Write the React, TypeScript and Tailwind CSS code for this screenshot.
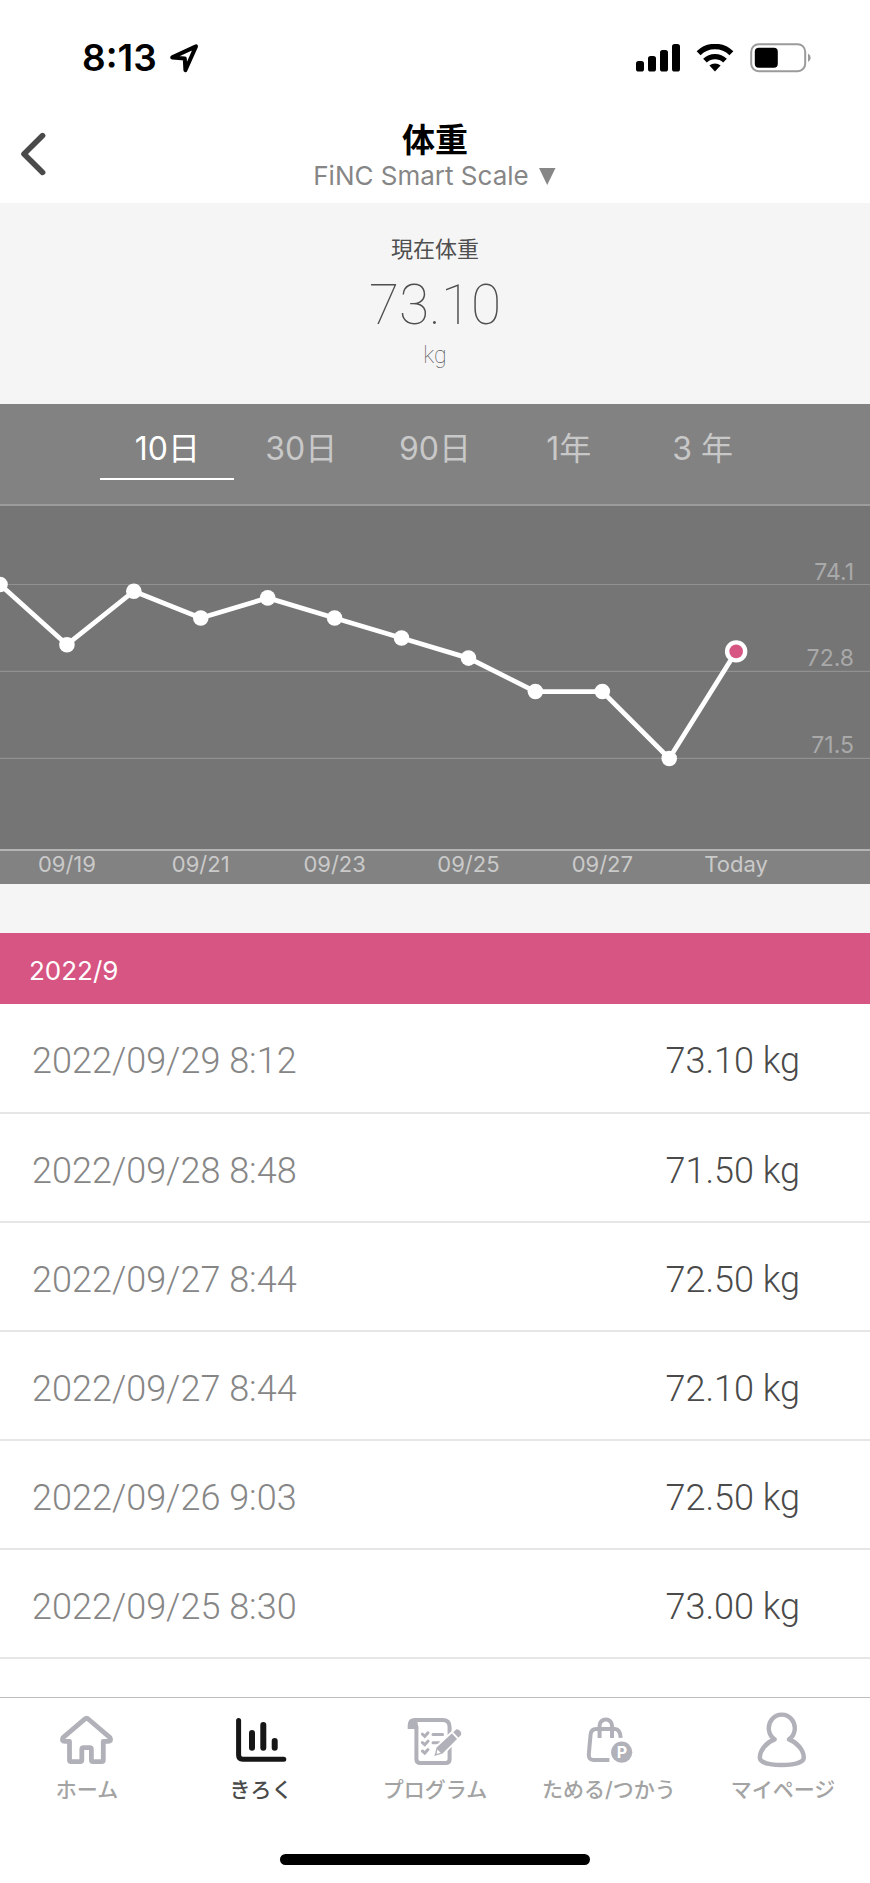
import React, { useState } from "react";

const periods = ["10日", "30日", "90日", "1年", "3 年"];

const weights = [74.1, 73.2, 74.0, 73.6, 73.9, 73.6, 73.3, 73.0, 72.5, 72.5, 71.5, 73.1];

const gridValues = [74.1, 72.8, 71.5];

const axisDates = ["09/19", "09/21", "09/23", "09/25", "09/27", "Today"];

const records = [
  { date: "2022/09/29 8:12", weight: "73.10 kg" },
  { date: "2022/09/28 8:48", weight: "71.50 kg" },
  { date: "2022/09/27 8:44", weight: "72.50 kg" },
  { date: "2022/09/27 8:44", weight: "72.10 kg" },
  { date: "2022/09/26 9:03", weight: "72.50 kg" },
  { date: "2022/09/25 8:30", weight: "73.00 kg" },
];

function StatusBar() {
  return (
    <div className="flex h-[116px] items-center justify-between pr-[58px] pl-[82px]">
      <div className="flex items-center gap-3">
        <span className="text-[37px] leading-[40px] font-semibold text-black">8:13</span>
        <svg width="30" height="32" viewBox="0 0 30 32" fill="none" aria-hidden="true">
          <path d="M3.2 15.4 27 4.4 16.4 28.2 15.8 16.6Z" stroke="#000" strokeWidth="4" strokeLinejoin="round" />
        </svg>
      </div>
      <div className="flex items-center gap-4">
        <svg width="44" height="28" viewBox="0 0 44 28" aria-hidden="true">
          <rect x="0" y="17" width="8" height="10.6" rx="2.6" />
          <rect x="12" y="12" width="8" height="15.6" rx="2.6" />
          <rect x="24" y="6" width="8" height="21.6" rx="2.6" />
          <rect x="36" y="0" width="8" height="27.6" rx="2.6" />
        </svg>
        <svg width="38" height="28" viewBox="0 0 38 28" aria-hidden="true">
          <path d="M2.6 9.2a23.6 23.6 0 0 1 32.8 0" fill="none" stroke="#000" strokeWidth="5.6" />
          <path d="M9 16.6a14.6 14.6 0 0 1 20 0" fill="none" stroke="#000" strokeWidth="5.4" />
          <path d="M19 27.6 13.4 21.6a8.4 8.4 0 0 1 11.2 0Z" />
        </svg>
        <svg width="62" height="30" viewBox="0 0 62 30" aria-hidden="true">
          <rect x="1.2" y="1.2" width="54" height="27" rx="7.5" fill="none" stroke="#9b9b9b" strokeWidth="2" />
          <rect x="4.8" y="4.8" width="23" height="20" rx="4" />
          <path d="M58 10.6a4.6 4.6 0 0 1 0 8.4Z" fill="#9b9b9b" />
        </svg>
      </div>
    </div>
  );
}

function Header() {
  return (
    <header className="grid h-[87px] grid-cols-[1fr_auto_1fr] items-start">
      <button type="button" aria-label="戻る" className="ml-5 w-10 pt-4">
        <svg width="28" height="44" viewBox="0 0 28 44" fill="none" aria-hidden="true">
          <path d="M22.6 3.6 4 22 22.6 40.4" stroke="#4a4a4a" strokeWidth="5.6" strokeLinecap="round" strokeLinejoin="round" />
        </svg>
      </button>
      <div className="flex flex-col items-center pt-[2px]">
        <h1 className="text-[33px] leading-[44px] font-bold text-black">体重</h1>
        <button type="button" className="flex items-center gap-2 text-[26px] leading-[28px] text-[#868686]">
          FiNC Smart Scale
          <svg width="20" height="20" viewBox="0 0 20 20" fill="#868686" aria-hidden="true">
            <path d="M2 2H18.5L10.2 19Z" />
          </svg>
        </button>
      </div>
    </header>
  );
}

function CurrentWeight() {
  return (
    <section className="flex h-[201px] flex-col items-center bg-[#f5f5f5] pt-[30px] text-[#4f4f4f]">
      <h2 className="text-[22px] leading-[32px]">現在体重</h2>
      <p className="mt-2 font-[Roboto] text-[55px] leading-[64px] font-thin">73.10</p>
      <p className="mt-1 font-[Roboto] text-[23px] leading-[30px] font-thin">kg</p>
    </section>
  );
}

function WeightChart() {
  const step = 870 / 13;
  const points = weights.map((w, i) => ({ x: i * step, y: 78.5 + (74.1 - w) * 66.9 }));
  const last = points[points.length - 1];
  return (
    <div className="bg-[#757575]">
      <svg viewBox="0 0 870 343" className="block w-full" role="img" aria-label="体重の推移">
        {gridValues.map((v) => {
          const y = 78.5 + (74.1 - v) * 66.9;
          return (
            <g key={v}>
              <line x1="0" x2="870" y1={y} y2={y} stroke="#919191" strokeWidth="1.2" />
              <text x="854" y={y - 5} textAnchor="end" className="fill-[#a9a9a9] text-[23px]">
                {v.toFixed(1)}
              </text>
            </g>
          );
        })}
        <polyline points={points.map((p) => `${p.x},${p.y}`).join(" ")} fill="none" stroke="#fff" strokeWidth="4.8" />
        {points.slice(0, -1).map((p) => (
          <circle key={p.x} cx={p.x} cy={p.y} r="7.8" fill="#fff" />
        ))}
        <circle cx={last.x} cy={last.y} r="11.2" fill="#fff" />
        <circle cx={last.x} cy={last.y} r="6.8" fill="#d75583" />
      </svg>
    </div>
  );
}

function ChartPanel() {
  const [active, setActive] = useState(periods[0]);
  return (
    <section className="bg-[#828282]">
      <div className="flex h-[102px] justify-center border-b-2 border-[#9c9c9c] pt-4">
        <div className="grid h-[60px] w-10/13 grid-cols-5">
          {periods.map((p) => (
            <button
              key={p}
              type="button"
              aria-pressed={p === active}
              onClick={() => setActive(p)}
              className={
                p === active
                  ? "border-b-2 border-white text-[32px] leading-[58px] text-white"
                  : "border-b-2 border-transparent text-[32px] leading-[58px] text-[#c8c8c8]"
              }
            >
              {p}
            </button>
          ))}
        </div>
      </div>
      <WeightChart />
      <div className="grid h-[35px] grid-cols-13 border-t-2 border-[#b4b4b4] text-center text-[22px] leading-[26px] text-[#cacaca]">
        {axisDates.map((d) => (
          <span key={d} className="col-span-2">
            {d}
          </span>
        ))}
      </div>
    </section>
  );
}

function Records() {
  return (
    <section>
      <h2 className="h-[71px] bg-[#d75583] px-[29px] text-[26px] leading-[76px] text-white">2022/9</h2>
      <table className="w-full border-collapse font-[Roboto] text-[36px] font-light">
        <tbody>
          {records.map((r, i) => (
            <tr key={i} className="h-[109px] border-b-2 border-[#e6e6e6]">
              <td className="pt-[6px] pl-[32px] text-left text-[#868686]">{r.date}</td>
              <td className="pt-[6px] pr-[70px] text-right text-[#4a4a4a]">{r.weight}</td>
            </tr>
          ))}
        </tbody>
      </table>
    </section>
  );
}

function HomeIcon() {
  return (
    <svg width="58" height="56" viewBox="0 0 58 56" fill="none" aria-hidden="true">
      <path
        d="M26.7 7.2Q28.6 5.4 30.5 7.2L52 25.6Q54 29.3 50 29.3H45.3V48Q45.3 49.6 43.7 49.6H34.9Q33.4 49.6 33.4 48V37.4Q33.4 35.6 31.6 35.6H25.6Q23.8 35.6 23.8 37.4V48Q23.8 49.6 22.2 49.6H13Q11.5 49.6 11.5 48V29.3H7Q3 29.3 5 25.6Z"
        stroke="#b1b1b9"
        strokeWidth="4.8"
        strokeLinejoin="round"
      />
    </svg>
  );
}

function RecordIcon() {
  return (
    <svg width="58" height="56" viewBox="0 0 58 56" fill="none" stroke="#161616" strokeLinecap="round" aria-hidden="true">
      <path d="M6.6 8.4V43Q6.6 47.2 10.8 47.2H51.8" strokeWidth="5" strokeLinejoin="round" />
      <path d="M20 21V35.8M31.3 13V35.8M42.7 29V35.8" strokeWidth="6" />
    </svg>
  );
}

function ProgramIcon() {
  return (
    <svg width="58" height="56" viewBox="0 0 58 56" fill="none" stroke="#b1b1b9" aria-hidden="true">
      <path d="M1.7 17V13.4Q1.7 6 9 6Q12.2 8.6 12.2 17Z" fill="#b1b1b9" stroke="none" />
      <path d="M8 7.9H36.4Q43.6 7.9 43.6 15V47Q43.6 51 39.6 51H14.4Q10.4 51 10.4 47V14" strokeWidth="4" />
      <path d="M16.4 22.2 18.8 24.3 22 20.8M16.4 30.6 18.8 32.7 22 29.2M16.4 39 18.8 41.1 22 37.6" strokeWidth="3" strokeLinecap="round" />
      <path d="M27 22.6H36.6M27 30.8H34" strokeWidth="3" strokeLinecap="round" />
      <path d="M28.4 44 30.6 35.4 50.4 17.2Q52.2 16.8 54.2 19Q56 21.2 55 23L36.6 41.6Z" fill="#b1b1b9" stroke="#fff" strokeWidth="3.6" strokeLinejoin="round" />
      <path d="M28.4 44 30.6 35.4 50.4 17.2Q52.2 16.8 54.2 19Q56 21.2 55 23L36.6 41.6Z" fill="#b1b1b9" stroke="none" />
      <path d="M46.2 20.4 52 26.6" stroke="#fff" strokeWidth="1.8" />
      <path d="M31.2 37.4 34.8 40.8 30.6 42Z" fill="#fff" stroke="none" />
    </svg>
  );
}

function PointsIcon() {
  return (
    <svg width="58" height="56" viewBox="0 0 58 56" fill="none" stroke="#b1b1b9" strokeWidth="4" aria-hidden="true">
      <path d="M29.4 48H13.4Q8.4 48 8.8 42.4L10.6 22.4Q11.2 17 16.2 17H35Q40 17 40.7 25.8" />
      <path d="M19.6 26V13.6A6.2 6.2 0 0 1 32 13.6V26" />
      <circle cx="41.7" cy="40.2" r="10.6" fill="#b1b1b9" stroke="none" />
      <text x="41.9" y="45.8" textAnchor="middle" className="fill-white stroke-none text-[16px] font-bold">
        P
      </text>
    </svg>
  );
}

function ProfileIcon() {
  return (
    <svg width="58" height="56" viewBox="0 0 58 56" fill="none" aria-hidden="true">
      <path
        d="M20.6 27.4C12 30.6 5.8 38.4 5.8 45.6C5.8 51 17 53 27.7 53S49.8 51 49.8 45.6C49.8 38.4 43.4 30.6 35 27.4A13 13.5 0 1 0 20.6 27.4Z"
        stroke="#b1b1b9"
        strokeWidth="4.4"
        strokeLinejoin="round"
      />
    </svg>
  );
}

const navItems = [
  { label: "ホーム", Icon: HomeIcon, active: false },
  { label: "きろく", Icon: RecordIcon, active: true },
  { label: "プログラム", Icon: ProgramIcon, active: false },
  { label: "ためる/つかう", Icon: PointsIcon, active: false },
  { label: "マイページ", Icon: ProfileIcon, active: false },
];

function TabBar() {
  return (
    <footer className="mt-auto border-t border-[#bdbdbd] bg-white">
      <nav className="grid h-[156px] grid-cols-5 pt-[14px]">
        {navItems.map(({ label, Icon, active }) => (
          <a
            key={label}
            href="#"
            aria-current={active ? "page" : undefined}
            className={
              active
                ? "flex flex-col items-center gap-[6px] text-[21px] leading-[32px] font-medium text-[#4a4a4a]"
                : "flex flex-col items-center gap-[6px] text-[21px] leading-[32px] font-medium text-[#a3a3a3]"
            }
          >
            <Icon />
            <span className="whitespace-nowrap">{label}</span>
          </a>
        ))}
      </nav>
      <div className="flex h-[29px] justify-center">
        <div className="h-[11px] w-[310px] rounded-full bg-black" />
      </div>
    </footer>
  );
}

export default function App() {
  return (
    <div className="flex min-h-screen flex-col bg-white font-[Inter,'Noto_Sans_CJK_JP',sans-serif]">
      <StatusBar />
      <Header />
      <main>
        <CurrentWeight />
        <ChartPanel />
        <div className="h-[49px] bg-[#f5f5f5]" />
        <Records />
      </main>
      <TabBar />
    </div>
  );
}
